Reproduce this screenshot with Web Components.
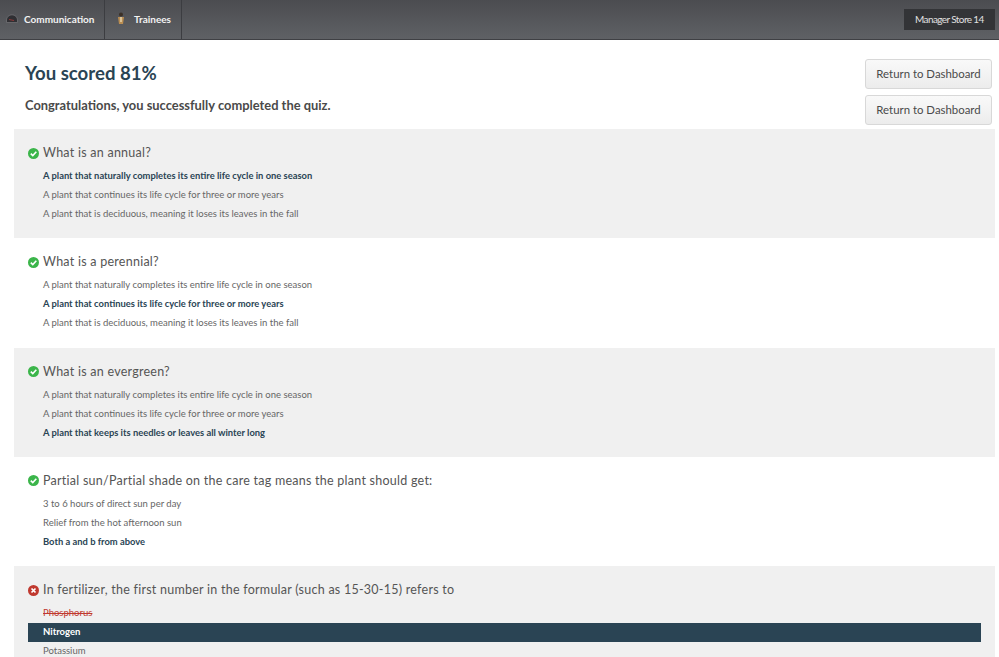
<!DOCTYPE html>
<html>
<head>
<meta charset="utf-8">
<title>Quiz results</title>
<style>
    html, body { margin: 0; height: 657px; overflow: hidden; background: #fff; }
    body { font-family: "Lato", "Liberation Sans", sans-serif; }
</style>
</head>
<body>
<top-bar>
    <nav-tab kind="gauge">Communication</nav-tab>
    <nav-tab kind="person">Trainees</nav-tab>
    <span slot="user">Manager Store 14</span>
</top-bar>
<score-head score="81" message="Congratulations, you successfully completed the quiz."></score-head>
<quiz-list></quiz-list>

<script>
class TopBar extends HTMLElement {
    constructor() {
        super();
        this.attachShadow({ mode: 'open' });
        this.shadowRoot.innerHTML = `
            <style>
                :host {
                    display: flex;
                    justify-content: space-between;
                    align-items: center;
                    height: 39px;
                    background: linear-gradient(#4b4c50, #5f6165);
                    border-bottom: 1px solid #3f4044;
                }
                .tabs { display: flex; height: 100%; }
                .user {
                    box-sizing: border-box;
                    margin: 0 4px 1px 0;
                    padding-left: 11px;
                    width: 91px;
                    height: 21px;
                    line-height: 20px;
                    background: #333437;
                    color: #e0e0e0;
                    font-size: 10px;
                    letter-spacing: -.6px;
                    white-space: nowrap;
                }
            </style>
            <div class="tabs"><slot></slot></div>
            <div class="user"><slot name="user"></slot></div>
        `;
    }
}

class NavTab extends HTMLElement {
    constructor() {
        super();
        this.attachShadow({ mode: 'open' });
        const gauge = this.getAttribute('kind') === 'gauge';
        const icon = gauge
            ? `<svg width="12" height="9" viewBox="0 0 12 9"><path d="M.5 8.5 V6 A5.5 5.2 0 0 1 11.5 6 V8.5 Z" fill="#2f2f33" stroke="#77777b" stroke-width=".7"/><path d="M3 5.5 L8 6.5" stroke="#8c3a3a" stroke-width="1.2"/></svg>`
            : `<svg width="8" height="13" viewBox="0 0 8 13"><circle cx="4" cy="2.5" r="2" fill="#3b3026"/><path d="M1 5 H7 L6 12 H2 Z" fill="#b98d52"/><path d="M3.3 5 h1.4 v5 h-1.4 z" fill="#e8d9b4"/></svg>`;
        this.shadowRoot.innerHTML = `
            <style>
                :host {
                    display: flex;
                    align-items: center;
                    box-sizing: border-box;
                    width: ${gauge ? 105 : 77}px;
                    height: 100%;
                    padding: 0 0 2px ${gauge ? 6 : 12}px;
                    gap: ${gauge ? 6 : 9}px;
                    border-right: 1px solid #3c3d41;
                    color: #f2f2f2;
                    font-size: 10px;
                    font-weight: 700;
                }
                svg { display: block; }
            </style>
            ${icon}
            <slot></slot>
        `;
    }
}

class DashButton extends HTMLElement {
    constructor() {
        super();
        this.attachShadow({ mode: 'open' });
        this.shadowRoot.innerHTML = `
            <style>
                :host {
                    display: block;
                    box-sizing: border-box;
                    width: 127px;
                    height: 30px;
                    line-height: 28px;
                    text-align: center;
                    border: 1px solid #d8d8d8;
                    border-radius: 3px;
                    background: linear-gradient(#f9f9f9, #ececec);
                    color: #4a4a4a;
                    font-size: 11.4px;
                }
            </style>
            <slot></slot>
        `;
    }
}

class ScoreHead extends HTMLElement {
    constructor() {
        super();
        this.attachShadow({ mode: 'open' });
        this.shadowRoot.innerHTML = `
            <style>
                :host {
                    display: flex;
                    justify-content: space-between;
                    height: 89px;
                    padding: 19px 7px 0 25px;
                    box-sizing: border-box;
                }
                h1 { margin: 0; color: #2a4454; font-size: 18.6px; line-height: 28px; font-weight: 700; }
                p { margin: 8px 0 0; color: #4a4a4a; font-size: 12.9px; line-height: 20px; font-weight: 700; }
                .buttons { display: flex; flex-direction: column; gap: 6px; }
            </style>
            <div>
                <h1>You scored ${this.getAttribute('score')}%</h1>
                <p>${this.getAttribute('message')}</p>
            </div>
            <div class="buttons">
                <dash-button>Return to Dashboard</dash-button>
                <dash-button>Return to Dashboard</dash-button>
            </div>
        `;
    }
}

class QuizQuestion extends HTMLElement {
    constructor() {
        super();
        this.attachShadow({ mode: 'open' });
    }

    // question, list of answers and which is right come in as a property
    set data(q) {
        const missed = q.wrong !== undefined;
        const icon = missed
            ? `<svg width="11" height="11" viewBox="0 0 11 11"><circle cx="5.5" cy="5.5" r="5.5" fill="#c0392f"/><path d="M3.5 3.5 L7.5 7.5 M7.5 3.5 L3.5 7.5" stroke="#fff" stroke-width="1.7"/></svg>`
            : `<svg width="11" height="11" viewBox="0 0 11 11"><circle cx="5.5" cy="5.5" r="5.5" fill="#3bb54a"/><path d="M2.8 5.6 L4.8 7.6 L8.3 3.8" fill="none" stroke="#fff" stroke-width="1.6"/></svg>`;
        const rows = q.answers.map((text, i) => {
            let cls = 'answer';
            if (i === q.correct) cls += missed ? ' bar' : ' right';
            if (i === q.wrong) cls += ' struck';
            return `<li class="${cls}">${text}</li>`;
        }).join('');
        this.shadowRoot.innerHTML = `
            <style>
                :host {
                    display: block;
                    box-sizing: border-box;
                    height: 109.25px;
                    padding: 13px 14px 0;
                }
                :host([shaded]) { background: #f0f0f0; }
                h2 {
                    display: flex;
                    align-items: center;
                    gap: 4px;
                    margin: 0 0 3px;
                    color: #555;
                    font-size: 12.5px;
                    line-height: 22px;
                    font-weight: 400;
                    letter-spacing: .25px;
                }
                ul { list-style: none; margin: 0; padding: 0; }
                .answer { height: 19px; line-height: 18px; padding-left: 15px; font-size: 9.5px; color: #666; }
                .right { color: #2a4454; font-weight: 700; font-size: 9.4px; }
                .bar { background: #2a4454; color: #fff; font-weight: 700; }
                .struck { color: #c0392f; text-decoration: line-through; }
            </style>
            <h2>${icon}<span>${q.title}</span></h2>
            <ul>${rows}</ul>
        `;
    }
}

const answersA = [
    'A plant that naturally completes its entire life cycle in one season',
    'A plant that continues its life cycle for three or more years',
    'A plant that is deciduous, meaning it loses its leaves in the fall'
];
const questions = [
    { title: 'What is an annual?', answers: answersA, correct: 0 },
    { title: 'What is a perennial?', answers: answersA, correct: 1 },
    { title: 'What is an evergreen?', answers: [answersA[0], answersA[1], 'A plant that keeps its needles or leaves all winter long'], correct: 2 },
    { title: 'Partial sun/Partial shade on the care tag means the plant should get:', answers: ['3 to 6 hours of direct sun per day', 'Relief from the hot afternoon sun', 'Both a and b from above'], correct: 2 },
    { title: 'In fertilizer, the first number in the formular (such as 15-30-15) refers to', answers: ['Phosphorus', 'Nitrogen', 'Potassium'], correct: 1, wrong: 0 }
];

class QuizList extends HTMLElement {
    constructor() {
        super();
        this.attachShadow({ mode: 'open' });
        this.shadowRoot.innerHTML = `
            <style>
                :host { display: block; margin: 0 4px 0 14px; }
            </style>
        `;
        questions.forEach((q, i) => {
            const item = document.createElement('quiz-question');
            if (i % 2 === 0) item.setAttribute('shaded', '');
            item.data = q;
            this.shadowRoot.appendChild(item);
        });
    }
}

customElements.define('top-bar', TopBar);
customElements.define('nav-tab', NavTab);
customElements.define('dash-button', DashButton);
customElements.define('score-head', ScoreHead);
customElements.define('quiz-question', QuizQuestion);
customElements.define('quiz-list', QuizList);
</script>
</body>
</html>
